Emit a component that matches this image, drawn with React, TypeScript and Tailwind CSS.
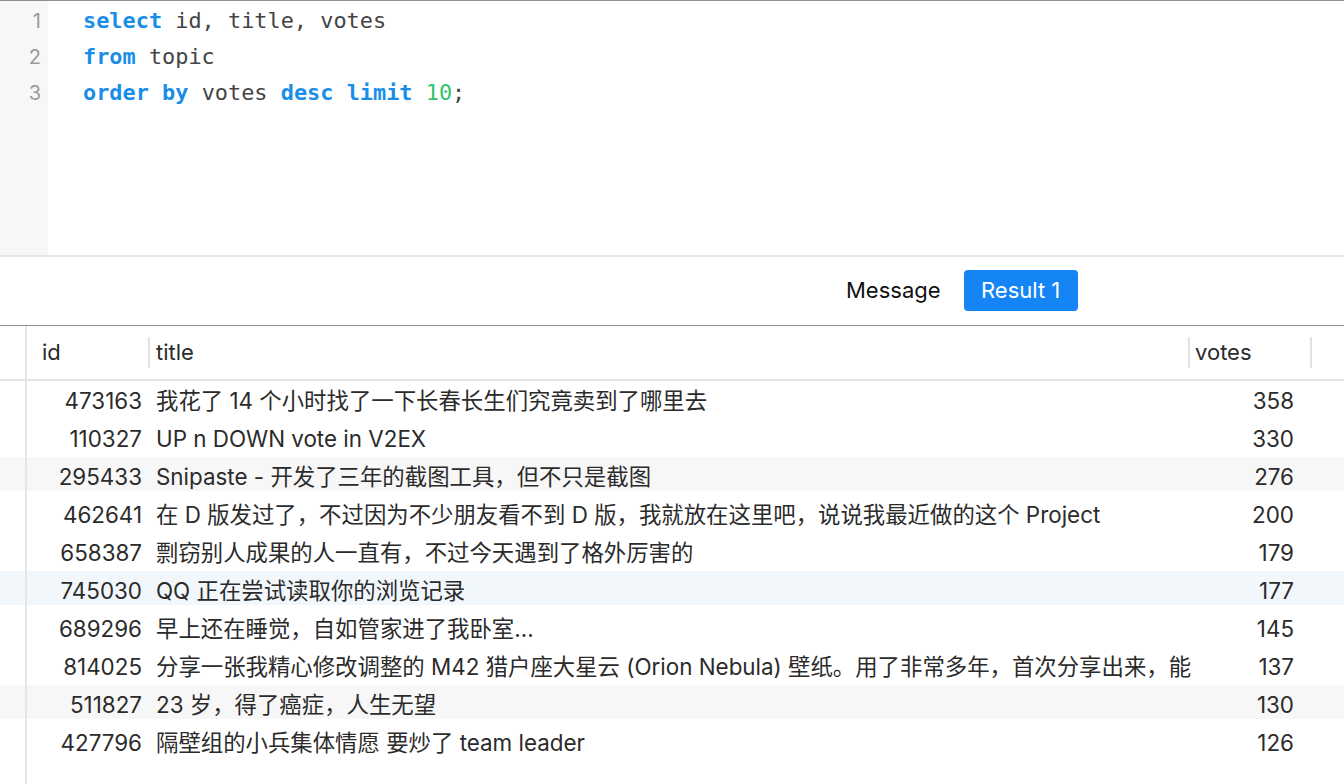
const rows = [
  { id: 473163, title: '我花了 14 个小时找了一下长春长生们究竟卖到了哪里去', votes: 358, bg: '' },
  { id: 110327, title: 'UP n DOWN vote in V2EX', votes: 330, bg: '' },
  { id: 295433, title: 'Snipaste - 开发了三年的截图工具，但不只是截图', votes: 276, bg: 'bg-[#f7f7f7]' },
  { id: 462641, title: '在 D 版发过了，不过因为不少朋友看不到 D 版，我就放在这里吧，说说我最近做的这个 Project', votes: 200, bg: '' },
  { id: 658387, title: '剽窃别人成果的人一直有，不过今天遇到了格外厉害的', votes: 179, bg: '' },
  { id: 745030, title: 'QQ 正在尝试读取你的浏览记录', votes: 177, bg: 'bg-[#f2f7fc]' },
  { id: 689296, title: '早上还在睡觉，自如管家进了我卧室...', votes: 145, bg: '' },
  { id: 814025, title: '分享一张我精心修改调整的 M42 猎户座大星云 (Orion Nebula) 壁纸。用了非常多年，首次分享出来，能', votes: 137, bg: '' },
  { id: 511827, title: '23 岁，得了癌症，人生无望', votes: 130, bg: 'bg-[#f7f7f7]' },
  { id: 427796, title: '隔壁组的小兵集体情愿 要炒了 team leader', votes: 126, bg: '' },
];

const mono = { fontFamily: '"DejaVu Sans Mono", "Liberation Mono", monospace' };

function Kw({ children }: { children: React.ReactNode }) {
  return <span className="font-bold text-[#1a8ee6]">{children}</span>;
}

export default function App() {
  return (
    <main
      className="h-[784px] w-[1344px] overflow-hidden bg-white text-[#2b2b2b] flex flex-col"
      style={{ fontFamily: 'Inter, "Noto Sans CJK SC", sans-serif' }}
    >
      {/* Editor */}
      <div className="flex h-[257px] shrink-0 border-t border-[#8f8f8f] border-b-2 border-b-[#e6e6e6]">
        <div className="w-[48px] bg-[#f7f7f7] pt-[2px] pr-[7px] text-right text-[20px] leading-[36px] text-[#9a9a9a]">
          <div>1</div>
          <div>2</div>
          <div>3</div>
        </div>
        <div className="pl-[35px] pt-[2px] text-[21.9px] leading-[36px] text-[#444]" style={mono}>
          <div>
            <Kw>select</Kw> id, title, votes
          </div>
          <div>
            <Kw>from</Kw> topic
          </div>
          <div>
            <Kw>order</Kw> <Kw>by</Kw> votes <Kw>desc</Kw> <Kw>limit</Kw>{' '}
            <span className="text-[#33c16c]">10</span>;
          </div>
        </div>
      </div>

      {/* Tabs */}
      <div className="flex h-[69px] shrink-0 items-center border-b border-[#8c8c8c] pl-[846px] pb-[2px]">
        <span className="text-[22px] text-[#111]">Message</span>
        <button className="ml-[23px] h-[41px] w-[114px] rounded-[4px] bg-[#1584f4] text-[22px] text-white">
          Result 1
        </button>
      </div>

      {/* Table */}
      <div className="relative flex-1">
        <div className="absolute left-0 top-0 bottom-0 w-[27px] border-r-2 border-[#e6e6e6]" />

        <div className="flex h-[55px] items-center border-b-2 border-[#e6e6e6] pl-[27px] text-[22px] text-[#2b2b2b]">
          <div className="w-[121px] pl-[15px]">id</div>
          <div className="h-[31px] w-[2px] bg-[#e3e3e3]" />
          <div className="w-[1038px] pl-[6px]">title</div>
          <div className="h-[31px] w-[2px] bg-[#e3e3e3]" />
          <div className="w-[120px] pl-[5px]">votes</div>
          <div className="h-[31px] w-[2px] bg-[#e3e3e3]" />
        </div>

        <div>
          {rows.map((r) => (
            <div key={r.id} className={`mb-[4px] flex h-[34px] pl-[27px] pt-[6px] text-[22.4px] leading-[28px] ${r.bg}`}>
              <div className="w-[115px] shrink-0 text-right">{r.id}</div>
              <div className="w-[1054px] shrink-0 whitespace-nowrap pl-[14px]">{r.title}</div>
              <div className="w-[98px] shrink-0 text-right">{r.votes}</div>
            </div>
          ))}
        </div>
      </div>
    </main>
  );
}
